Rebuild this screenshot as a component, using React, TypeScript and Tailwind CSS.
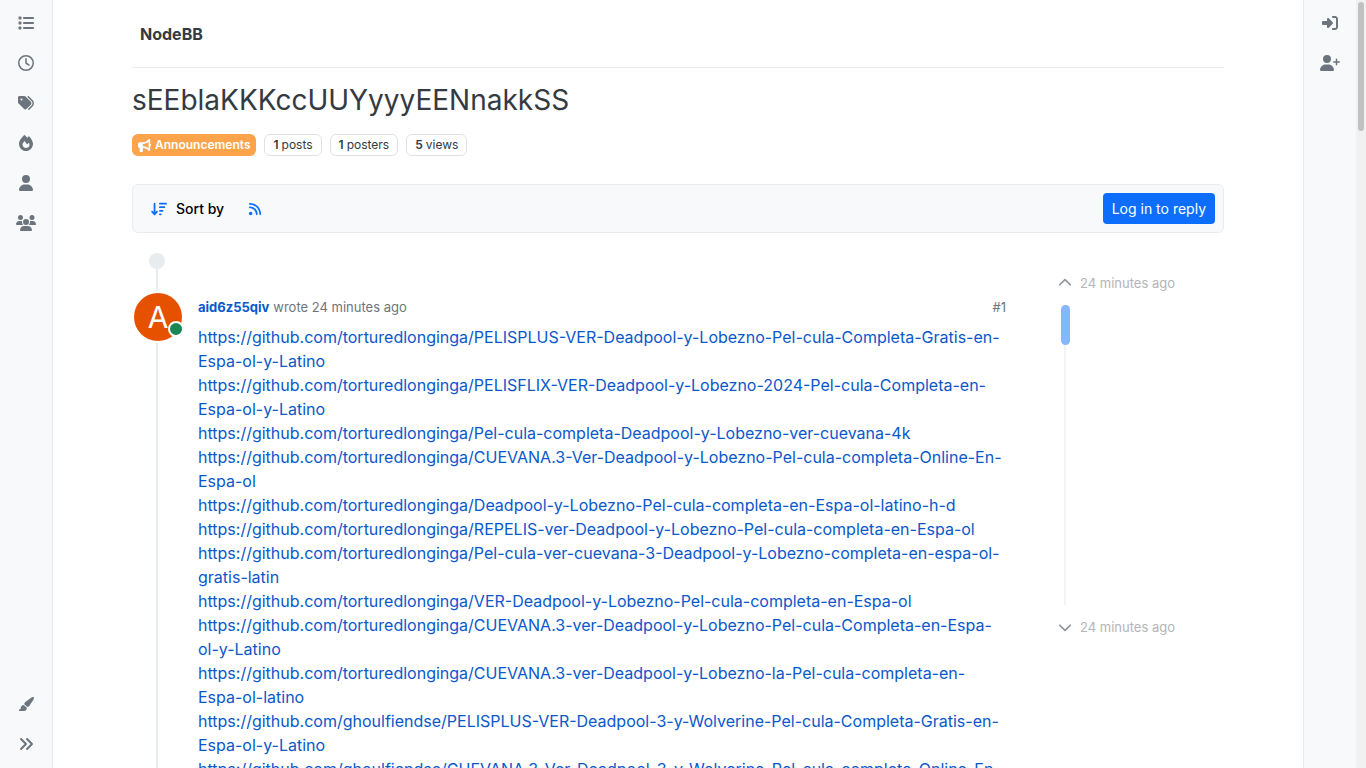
import type { ReactNode } from 'react';
import type { IconType } from 'react-icons';
import {
  FaAnglesRight,
  FaArrowDownWideShort,
  FaBullhorn,
  FaChevronDown,
  FaChevronUp,
  FaFire,
  FaList,
  FaPaintbrush,
  FaRegClock,
  FaRightToBracket,
  FaRss,
  FaTags,
  FaUser,
  FaUserPlus,
  FaUsers,
} from 'react-icons/fa6';

const torturedlonginga = 'https://github.com/torturedlonginga/';
const ghoulfiendse = 'https://github.com/ghoulfiendse/';

const links = [
  torturedlonginga + 'PELISPLUS-VER-Deadpool-y-Lobezno-Pel-cula-Completa-Gratis-en-Espa-ol-y-Latino',
  torturedlonginga + 'PELISFLIX-VER-Deadpool-y-Lobezno-2024-Pel-cula-Completa-en-Espa-ol-y-Latino',
  torturedlonginga + 'Pel-cula-completa-Deadpool-y-Lobezno-ver-cuevana-4k',
  torturedlonginga + 'CUEVANA.3-Ver-Deadpool-y-Lobezno-Pel-cula-completa-Online-En-Espa-ol',
  torturedlonginga + 'Deadpool-y-Lobezno-Pel-cula-completa-en-Espa-ol-latino-h-d',
  torturedlonginga + 'REPELIS-ver-Deadpool-y-Lobezno-Pel-cula-completa-en-Espa-ol',
  torturedlonginga + 'Pel-cula-ver-cuevana-3-Deadpool-y-Lobezno-completa-en-espa-ol-gratis-latin',
  torturedlonginga + 'VER-Deadpool-y-Lobezno-Pel-cula-completa-en-Espa-ol',
  torturedlonginga + 'CUEVANA.3-ver-Deadpool-y-Lobezno-Pel-cula-Completa-en-Espa-ol-y-Latino',
  torturedlonginga + 'CUEVANA.3-ver-Deadpool-y-Lobezno-la-Pel-cula-completa-en-Espa-ol-latino',
  ghoulfiendse + 'PELISPLUS-VER-Deadpool-3-y-Wolverine-Pel-cula-Completa-Gratis-en-Espa-ol-y-Latino',
  ghoulfiendse + 'CUEVANA.3-Ver-Deadpool-3-y-Wolverine-Pel-cula-completa-Online-En-Espa-ol',
];

interface NavItem {
  label: string;
  icon: IconType;
}

const leftNav: NavItem[] = [
  { label: 'Categories', icon: FaList },
  { label: 'Recent', icon: FaRegClock },
  { label: 'Tags', icon: FaTags },
  { label: 'Popular', icon: FaFire },
  { label: 'Users', icon: FaUser },
  { label: 'Groups', icon: FaUsers },
];

const rightNav: NavItem[] = [
  { label: 'Login', icon: FaRightToBracket },
  { label: 'Register', icon: FaUserPlus },
];

const stats = [
  { count: 1, label: 'posts' },
  { count: 1, label: 'posters' },
  { count: 5, label: 'views' },
];

function NavLinks({ items }: { items: NavItem[] }) {
  return (
    <ul>
      {items.map(({ label, icon: Icon }) => (
        <li key={label}>
          <a href="#" aria-label={label} className="flex h-10 items-center justify-center">
            <Icon className="h-4 w-5" />
          </a>
        </li>
      ))}
    </ul>
  );
}

function Stat({ children }: { children: ReactNode }) {
  return (
    <span className="flex h-[22px] items-center gap-[3px] rounded-md border border-[#dee2e6] px-2 text-xs">
      {children}
    </span>
  );
}

export default function App() {
  return (
    <div className="flex h-screen overflow-hidden bg-white font-['Inter',sans-serif] text-[#343a40]">
      <nav className="flex w-[53px] shrink-0 flex-col justify-between border-r border-[#e9ecef] bg-[#f8f9fa] pt-[3px] pb-1 text-[#6c757d]">
        <NavLinks items={leftNav} />
        <div>
          <button type="button" aria-label="Skins" className="flex h-10 w-full items-center justify-center">
            <FaPaintbrush className="size-4" />
          </button>
          <button type="button" aria-label="Expand" className="flex h-10 w-full items-center justify-center">
            <FaAnglesRight className="size-4" />
          </button>
        </div>
      </nav>

      <main className="min-w-0 flex-1">
        <div className="mx-auto max-w-[1140px] px-6">
          <header className="flex h-17 items-center border-b border-[#e9ecef] px-2">
            <a href="#" className="font-bold">NodeBB</a>
          </header>

          <h1 className="mt-4 text-[28px] leading-8">sEEblaKKKccUUYyyyEENnakkSS</h1>

          <div className="mt-[18px] flex gap-2">
            <a
              href="#"
              className="flex h-[22px] items-center gap-1 rounded-md bg-[#fda34b] px-[6px] text-xs font-semibold text-white"
            >
              <FaBullhorn className="size-[13px]" />
              Announcements
            </a>
            {stats.map(s => (
              <Stat key={s.label}>
                <b className="font-semibold">{s.count}</b>
                {s.label}
              </Stat>
            ))}
          </div>

          {/* topic toolbar */}
          <div className="mt-7 flex items-center justify-between rounded-md border border-[#e9ecef] bg-[#f8f9fa] p-2 text-sm">
            <div className="flex items-center gap-6 pl-[10px]">
              <button type="button" className="flex items-center gap-[9px] font-medium text-black">
                <FaArrowDownWideShort className="size-4 text-[#0d6efd]" />
                Sort by
              </button>
              <a href="#" aria-label="RSS feed" className="text-[#0d6efd]">
                <FaRss className="size-[14px]" />
              </a>
            </div>
            <a href="#" className="flex h-[31px] items-center rounded bg-[#0d6efd] px-[9px] text-white">
              Log in to reply
            </a>
          </div>

          <div className="mt-5 flex">
            <div className="flex w-[66px] shrink-0 flex-col items-start">
              <span className="ml-[17px] size-4 rounded-full bg-[#e9ecef]" />
              <span className="ml-6 h-[22px] w-[2px] bg-[#e9ecef]" />
              <span className="relative m-[2px] flex size-12 items-center justify-center rounded-full bg-[#e65100] text-[30px] text-white">
                A
                <span className="absolute right-[-2px] bottom-1 size-4 rounded-full border-2 border-white bg-[#198754]" />
              </span>
              <span className="ml-6 w-[2px] flex-1 bg-[#e9ecef]" />
            </div>

            <article className="min-w-0 flex-1 pt-11">
              <div className="flex items-center gap-1 text-[13px] leading-5 text-[#6c757d]">
                <a href="#" className="font-bold text-[#0a58ca]">aid6z55qiv</a>
                <span>wrote 24 minutes ago</span>
                <a href="#" className="ml-auto">#1</a>
              </div>
              <p className="mt-2 leading-6 text-[#0a58ca]">
                {links.map(url => (
                  <a key={url} href={url} className="block">{url}</a>
                ))}
              </p>
            </article>

            {/* pagination track */}
            <aside className="ml-13 w-[166px] shrink-0 pt-5 text-[13px] leading-5 text-[#b3b5b8]">
              <a href="#" className="flex items-center gap-2">
                <FaChevronUp className="size-[14px] text-[#8f9499]" />
                24 minutes ago
              </a>
              <div className="my-3 flex h-[300px] w-[14px] flex-col items-center">
                <span className="h-10 w-[9px] rounded-full bg-[#86b7fe]" />
                <span className="w-[2px] flex-1 bg-[#f1f3f5]" />
              </div>
              <a href="#" className="flex items-center gap-2">
                <FaChevronDown className="size-[14px] text-[#8f9499]" />
                24 minutes ago
              </a>
            </aside>
          </div>
        </div>
      </main>

      <nav className="w-[53px] shrink-0 border-l border-[#e9ecef] bg-[#f8f9fa] pt-[3px] text-[#6c757d]">
        <NavLinks items={rightNav} />
      </nav>

      {/* scrollbar */}
      <div className="w-[10px] shrink-0 bg-[#f1f1f1] px-[2px] pt-[2px]">
        <div className="h-[129px] rounded-full bg-[#c1c1c1]" />
      </div>
    </div>
  );
}
